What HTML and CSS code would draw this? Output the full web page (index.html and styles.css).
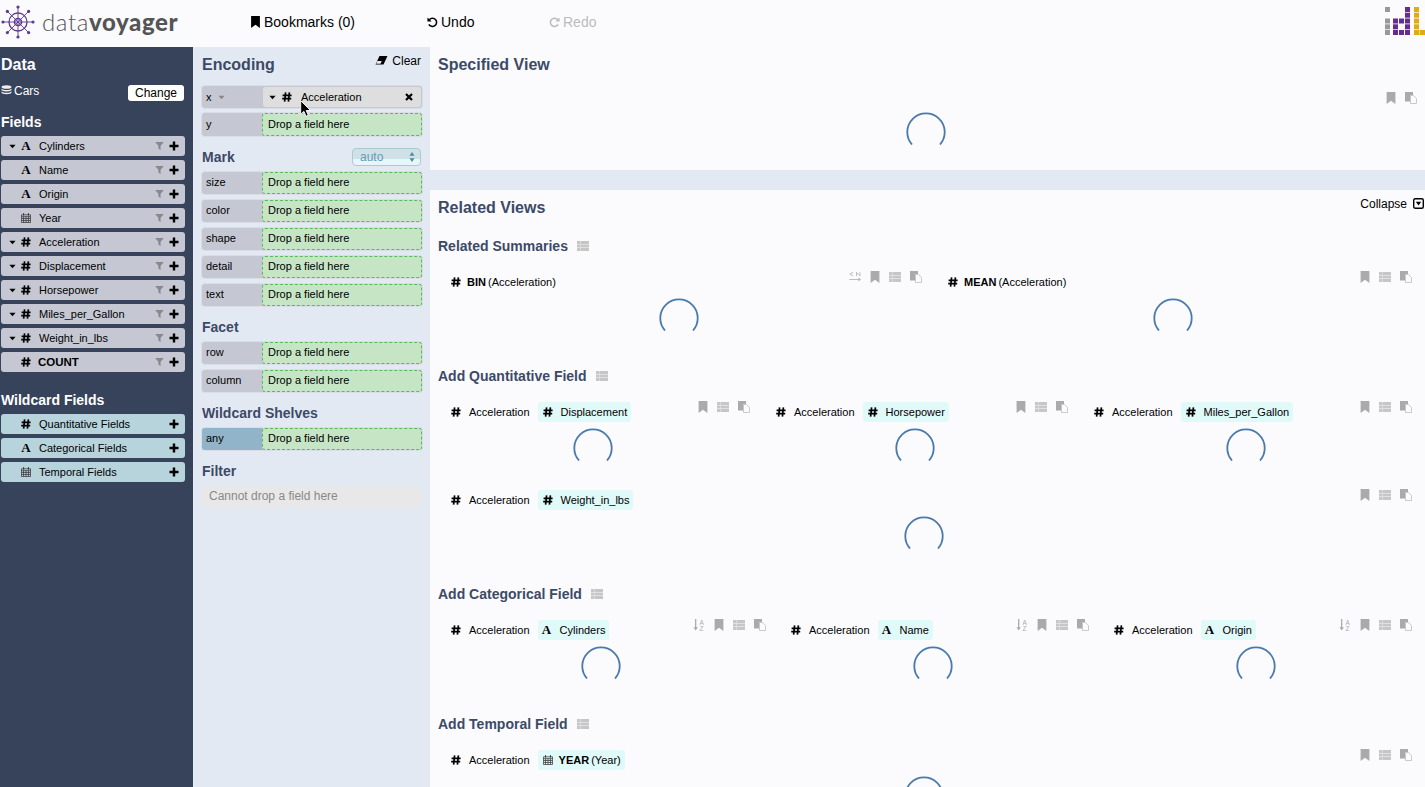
FILE: index.html
```html
<!DOCTYPE html>
<html>
	<head>
		<meta charset="utf-8" />
		<title>Voyager</title>
		<link rel="stylesheet" href="styles.css">
	</head>
	<body>
		<svg class="sprite" xmlns="http://www.w3.org/2000/svg">
			<symbol id="i-hash" viewBox="0 0 10 10"><path d="M3.6 .3 2.6 9.7M7.4 .3 6.4 9.7M.6 3.3h9M.2 6.7h9" fill="none" stroke="currentColor" stroke-width="1.7"/></symbol>
			<symbol id="i-plus" viewBox="0 0 10 10"><path d="M3.8 .5h2.4v3.3h3.3v2.4H6.2v3.3H3.8V6.2H.5V3.8h3.3z" fill="currentColor"/></symbol>
			<symbol id="i-filter" viewBox="0 0 10 10"><path d="M.2 .5h9.6L6.2 4.6v5L3.8 7.8V4.6z" fill="currentColor"/></symbol>
			<symbol id="i-caret" viewBox="0 0 8 5"><path d="M.5 .5h7L4 4.5z" fill="currentColor"/></symbol>
			<symbol id="i-cal" viewBox="0 0 11 11"><path d="M.5 2h10v8.5H.5zM.5 4h10M.5 6h10M.5 8.2h10M2.8 4v6.5M5.5 4v6.5M8.2 4v6.5" fill="none" stroke="currentColor" stroke-width=".8"/><path d="M2.2 .3h1.2v2.4H2.2zM7.6 .3h1.2v2.4H7.6z" fill="currentColor"/></symbol>
			<symbol id="i-db" viewBox="0 0 11 11"><ellipse cx="5.5" cy="2" rx="5" ry="1.8" fill="currentColor"/><path d="M.5 3.4v1.4c0 1 2.2 1.7 5 1.7s5-.7 5-1.7V3.4c-.8 1-2.8 1.5-5 1.5s-4.200-.5-5-1.500zM.5 6.200v1.400c0 1 2.200 1.700 5 1.700s5-.7 5-1.700V6.200c-.8 1-2.800 1.500-5 1.500s-4.200-.5-5-1.500z" fill="currentColor"/></symbol>
			<symbol id="i-bookmark" viewBox="0 0 10 12"><path d="M.6 0h8.800v12L5 8.800.6 12z" fill="currentColor"/></symbol>
			<symbol id="i-list" viewBox="0 0 12 10"><path d="M0 0h12v3H0zM0 3.500h12v3H0zM0 7h12v3H0z" fill="#c6c6c6"/><path d="M3.400 0v10" stroke="#e4e4e4" stroke-width=".7"/></symbol>
			<symbol id="i-copy" viewBox="0 0 12 12"><path d="M0 0h8v3H5.500v6.500H0z" fill="#aaa"/><path d="M5.500 3.500h3L11.500 6.500v5H5.500z" fill="#fbfbfe" stroke="#c4c4c4" stroke-width=".9"/></symbol>
			<symbol id="i-swap" viewBox="0 0 12 11"><path d="M4.200 .8.800 2.600l3.400 1.800M7.500 4.400V.8l3.500 3.600V.8M.3 8h9.700" fill="none" stroke="currentColor" stroke-width=".9"/><path d="M9.500 6 12 8 9.500 10z" fill="currentColor"/></symbol>
			<symbol id="i-sort" viewBox="0 0 12 13"><path d="M2.400 0v10" stroke="#aaa" stroke-width="1.400"/><path d="M0 9h4.800L2.400 12.500z" fill="#aaa"/><text x="6.500" y="6" font-size="7" font-family="Liberation Sans" fill="#aaa">A</text><text x="6.500" y="13" font-size="7" font-family="Liberation Sans" fill="#aaa">Z</text></symbol>
			<symbol id="i-spin" viewBox="0 0 40 33"><path d="M6 32.500A18.700 18.700 0 1 1 34 32.500" fill="none" stroke="currentColor" stroke-width="1.800"/></symbol>
		</svg>

		<header class="topbar">
			<div class="logo">
				<svg class="logo-wheel" viewBox="0 0 34 34">
					<g stroke="#5d3b8f" fill="none">
						<circle cx="17" cy="17" r="9" stroke-width="1.300"/>
						<circle cx="17" cy="17" r="3.500" stroke-width="1.600"/>
						<path d="M17 1v32M1 17h32M5.700 5.700l22.600 22.600M28.300 5.700 5.700 28.300" stroke-width=".9"/>
					</g>
					<g fill="#5d3b8f">
						<circle cx="17" cy="2" r="1.600"/><circle cx="17" cy="32" r="1.600"/><circle cx="2" cy="17" r="1.600"/><circle cx="32" cy="17" r="1.600"/>
						<circle cx="6.400" cy="6.400" r="1.600"/><circle cx="27.600" cy="6.400" r="1.600"/><circle cx="6.400" cy="27.600" r="1.600"/><circle cx="27.600" cy="27.600" r="1.600"/>
					</g>
				</svg>
				<span class="logo-text">data<b>voyager</b></span>
			</div>
			<a class="nav nav-bookmarks"><svg class="nav-icon"><use href="#i-bookmark"/></svg>Bookmarks (0)</a>
			<a class="nav nav-undo">
				<svg class="nav-icon" viewBox="0 0 12 12"><path d="M2.500 3.500A4.500 4.500 0 1 1 2 8.500" fill="none" stroke="currentColor" stroke-width="1.700"/><path d="M.5 1v4.500H5z" fill="currentColor"/></svg>Undo</a>
			<a class="nav nav-redo">
				<svg class="nav-icon" viewBox="0 0 12 12"><path d="M9.500 3.500A4.500 4.500 0 1 0 10 8.500" fill="none" stroke="currentColor" stroke-width="1.700"/><path d="M11.500 1v4.500H7z" fill="currentColor"/></svg>Redo</a>
			<svg class="idl-logo" viewBox="0 0 40 29">
				<g fill="#999">
					<rect x="0" y="0" width="5" height="5"/><rect x="0" y="11.500" width="5" height="5"/><rect x="0" y="17.300" width="5" height="5"/><rect x="0" y="23" width="5" height="5"/>
				</g>
				<g fill="#662d91">
					<rect x="8" y="11.500" width="5" height="5"/><rect x="14" y="11.500" width="5" height="5"/>
					<rect x="8" y="17.300" width="5" height="5"/>
					<rect x="8" y="23" width="5" height="5"/><rect x="14" y="23" width="5" height="5"/>
					<rect x="20" y="0" width="5" height="5"/><rect x="20" y="5.700" width="5" height="5"/><rect x="20" y="11.500" width="5" height="5"/><rect x="20" y="17.300" width="5" height="5"/><rect x="20" y="23" width="5" height="5"/>
				</g>
				<g fill="#e0ac10">
					<rect x="29" y="0" width="5" height="5"/><rect x="29" y="5.700" width="5" height="5"/><rect x="29" y="11.500" width="5" height="5"/><rect x="29" y="17.300" width="5" height="5"/><rect x="29" y="23" width="5" height="5"/><rect x="34.500" y="23" width="5.500" height="5"/>
				</g>
			</svg>
		</header>

		<div class="app">
			<aside class="sidebar">
				<h2 class="side-title">Data</h2>
				<div class="dataset">
					<svg class="dataset-icon"><use href="#i-db"/></svg><span class="dataset-name">Cars</span>
					<button class="change-btn">Change</button>
				</div>
				<h3 class="side-subtitle">Fields</h3>
				<div class="field"><svg class="caret"><use href="#i-caret"/></svg><span class="type-a">A</span><span class="field-name">Cylinders</span><svg class="filter"><use href="#i-filter"/></svg><svg class="plus"><use href="#i-plus"/></svg></div>
				<div class="field"><span class="caret"></span><span class="type-a">A</span><span class="field-name">Name</span><svg class="filter"><use href="#i-filter"/></svg><svg class="plus"><use href="#i-plus"/></svg></div>
				<div class="field"><span class="caret"></span><span class="type-a">A</span><span class="field-name">Origin</span><svg class="filter"><use href="#i-filter"/></svg><svg class="plus"><use href="#i-plus"/></svg></div>
				<div class="field"><span class="caret"></span><svg class="type-icon cal"><use href="#i-cal"/></svg><span class="field-name">Year</span><svg class="filter"><use href="#i-filter"/></svg><svg class="plus"><use href="#i-plus"/></svg></div>
				<div class="field"><svg class="caret"><use href="#i-caret"/></svg><svg class="type-icon"><use href="#i-hash"/></svg><span class="field-name">Acceleration</span><svg class="filter"><use href="#i-filter"/></svg><svg class="plus"><use href="#i-plus"/></svg></div>
				<div class="field"><svg class="caret"><use href="#i-caret"/></svg><svg class="type-icon"><use href="#i-hash"/></svg><span class="field-name">Displacement</span><svg class="filter"><use href="#i-filter"/></svg><svg class="plus"><use href="#i-plus"/></svg></div>
				<div class="field"><svg class="caret"><use href="#i-caret"/></svg><svg class="type-icon"><use href="#i-hash"/></svg><span class="field-name">Horsepower</span><svg class="filter"><use href="#i-filter"/></svg><svg class="plus"><use href="#i-plus"/></svg></div>
				<div class="field"><svg class="caret"><use href="#i-caret"/></svg><svg class="type-icon"><use href="#i-hash"/></svg><span class="field-name">Miles_per_Gallon</span><svg class="filter"><use href="#i-filter"/></svg><svg class="plus"><use href="#i-plus"/></svg></div>
				<div class="field"><svg class="caret"><use href="#i-caret"/></svg><svg class="type-icon"><use href="#i-hash"/></svg><span class="field-name">Weight_in_lbs</span><svg class="filter"><use href="#i-filter"/></svg><svg class="plus"><use href="#i-plus"/></svg></div>
				<div class="field"><span class="caret"></span><svg class="type-icon"><use href="#i-hash"/></svg><span class="field-name count">COUNT</span><svg class="filter"><use href="#i-filter"/></svg><svg class="plus"><use href="#i-plus"/></svg></div>

				<h3 class="side-subtitle wildcard-title">Wildcard Fields</h3>
				<div class="field wild"><span class="caret"></span><svg class="type-icon"><use href="#i-hash"/></svg><span class="field-name">Quantitative Fields</span><svg class="plus"><use href="#i-plus"/></svg></div>
				<div class="field wild"><span class="caret"></span><span class="type-a">A</span><span class="field-name">Categorical Fields</span><svg class="plus"><use href="#i-plus"/></svg></div>
				<div class="field wild"><span class="caret"></span><svg class="type-icon cal"><use href="#i-cal"/></svg><span class="field-name">Temporal Fields</span><svg class="plus"><use href="#i-plus"/></svg></div>
			</aside>

			<section class="encoding">
				<div class="enc-head">
					<h2 class="pane-title">Encoding</h2>
					<a class="clear">
						<svg class="clear-icon" viewBox="0 0 12 9"><path d="M4 0h8L8 8.500H0z" fill="#000"/><path d="M1.800 5h4.500L5 7.700H.6z" fill="#e3e9f3"/></svg>Clear</a>
				</div>
				<div class="shelf first">
					<div class="shelf-label">x<svg class="label-caret"><use href="#i-caret"/></svg></div>
					<div class="pill">
						<svg class="caret"><use href="#i-caret"/></svg>
						<svg class="type-icon"><use href="#i-hash"/></svg>
						<span class="pill-name">Acceleration</span>
						<svg class="pill-x" viewBox="0 0 8 8"><path d="M1 1l6 6M7 1 1 7" stroke="#000" stroke-width="2.200"/></svg>
						<svg class="cursor" viewBox="0 0 11 17"><path d="M.7 .7v13.600l3.200-3 2.100 5 2.300-1-2.100-4.800h4.300z" fill="#000" stroke="#fff" stroke-width=".9"/></svg>
					</div>
				</div>
				<div class="shelf second"><div class="shelf-label">y</div><div class="drop">Drop a field here</div></div>

				<div class="enc-title mark-head">
					<span>Mark</span>
					<span class="mark-select">auto<svg class="updown" viewBox="0 0 6 10"><path d="M3 0l2.500 3.800h-5zM3 10 .5 6.200h5z" fill="#4a8aa8"/></svg></span>
				</div>
				<div class="shelf"><div class="shelf-label">size</div><div class="drop">Drop a field here</div></div>
				<div class="shelf"><div class="shelf-label">color</div><div class="drop">Drop a field here</div></div>
				<div class="shelf"><div class="shelf-label">shape</div><div class="drop">Drop a field here</div></div>
				<div class="shelf"><div class="shelf-label">detail</div><div class="drop">Drop a field here</div></div>
				<div class="shelf"><div class="shelf-label">text</div><div class="drop">Drop a field here</div></div>

				<div class="enc-title">Facet</div>
				<div class="shelf"><div class="shelf-label">row</div><div class="drop">Drop a field here</div></div>
				<div class="shelf"><div class="shelf-label">column</div><div class="drop">Drop a field here</div></div>

				<div class="enc-title">Wildcard Shelves</div>
				<div class="shelf"><div class="shelf-label any">any</div><div class="drop">Drop a field here</div></div>

				<div class="enc-title">Filter</div>
				<div class="no-drop">Cannot drop a field here</div>
			</section>

			<main class="views">
				<section class="specified">
					<h2 class="pane-title">Specified View</h2>
					<div class="tools spec-tools"><svg class="tool bm"><use href="#i-bookmark"/></svg><svg class="tool"><use href="#i-copy"/></svg></div>
					<svg class="spinner"><use href="#i-spin"/></svg>
				</section>
				<div class="band"></div>
				<section class="related">
					<div class="related-head">
						<h2 class="pane-title">Related Views</h2>
						<a class="collapse">Collapse<svg class="collapse-icon" viewBox="0 0 11 11"><rect x=".7" y=".7" width="9.600" height="9.600" rx="1.500" fill="none" stroke="#000" stroke-width="1.400"/><path d="M2.800 3.800h5.400L5.500 7.500z" fill="#000"/></svg></a>
					</div>

					<h3 class="group-title">Related Summaries<svg class="tool group-icon"><use href="#i-list"/></svg></h3>
					<div class="cards cards-summaries">
						<div class="card">
							<div class="card-head">
								<span class="enc-field"><svg class="type-icon"><use href="#i-hash"/></svg><span class="view-name agg"><b>BIN</b> (Acceleration)</span></span>
								<div class="tools"><svg class="tool"><use href="#i-swap"/></svg><svg class="tool bm"><use href="#i-bookmark"/></svg><svg class="tool"><use href="#i-list"/></svg><svg class="tool"><use href="#i-copy"/></svg></div>
							</div>
							<svg class="spinner"><use href="#i-spin"/></svg>
						</div>
						<div class="card">
							<div class="card-head">
								<span class="enc-field"><svg class="type-icon"><use href="#i-hash"/></svg><span class="view-name agg"><b>MEAN</b> (Acceleration)</span></span>
								<div class="tools"><svg class="tool bm"><use href="#i-bookmark"/></svg><svg class="tool"><use href="#i-list"/></svg><svg class="tool"><use href="#i-copy"/></svg></div>
							</div>
							<svg class="spinner"><use href="#i-spin"/></svg>
						</div>
					</div>

					<h3 class="group-title">Add Quantitative Field<svg class="tool group-icon"><use href="#i-list"/></svg></h3>
					<div class="cards cards-quant">
						<div class="card">
							<div class="card-head">
								<span class="enc-field"><svg class="type-icon"><use href="#i-hash"/></svg><span class="view-name">Acceleration</span></span>
								<span class="chip"><svg class="type-icon"><use href="#i-hash"/></svg><span class="view-name">Displacement</span></span>
								<div class="tools"><svg class="tool bm"><use href="#i-bookmark"/></svg><svg class="tool"><use href="#i-list"/></svg><svg class="tool"><use href="#i-copy"/></svg></div>
							</div>
							<svg class="spinner"><use href="#i-spin"/></svg>
						</div>
						<div class="card">
							<div class="card-head">
								<span class="enc-field"><svg class="type-icon"><use href="#i-hash"/></svg><span class="view-name">Acceleration</span></span>
								<span class="chip"><svg class="type-icon"><use href="#i-hash"/></svg><span class="view-name">Horsepower</span></span>
								<div class="tools"><svg class="tool bm"><use href="#i-bookmark"/></svg><svg class="tool"><use href="#i-list"/></svg><svg class="tool"><use href="#i-copy"/></svg></div>
							</div>
							<svg class="spinner"><use href="#i-spin"/></svg>
						</div>
						<div class="card">
							<div class="card-head">
								<span class="enc-field"><svg class="type-icon"><use href="#i-hash"/></svg><span class="view-name">Acceleration</span></span>
								<span class="chip"><svg class="type-icon"><use href="#i-hash"/></svg><span class="view-name">Miles_per_Gallon</span></span>
								<div class="tools"><svg class="tool bm"><use href="#i-bookmark"/></svg><svg class="tool"><use href="#i-list"/></svg><svg class="tool"><use href="#i-copy"/></svg></div>
							</div>
							<svg class="spinner"><use href="#i-spin"/></svg>
						</div>
						<div class="card card-full">
							<div class="card-head">
								<span class="enc-field"><svg class="type-icon"><use href="#i-hash"/></svg><span class="view-name">Acceleration</span></span>
								<span class="chip"><svg class="type-icon"><use href="#i-hash"/></svg><span class="view-name">Weight_in_lbs</span></span>
								<div class="tools"><svg class="tool bm"><use href="#i-bookmark"/></svg><svg class="tool"><use href="#i-list"/></svg><svg class="tool"><use href="#i-copy"/></svg></div>
							</div>
							<svg class="spinner"><use href="#i-spin"/></svg>
						</div>
					</div>

					<h3 class="group-title">Add Categorical Field<svg class="tool group-icon"><use href="#i-list"/></svg></h3>
					<div class="cards cards-cat">
						<div class="card">
							<div class="card-head">
								<span class="enc-field"><svg class="type-icon"><use href="#i-hash"/></svg><span class="view-name">Acceleration</span></span>
								<span class="chip"><span class="type-a">A</span><span class="view-name">Cylinders</span></span>
								<div class="tools"><svg class="tool"><use href="#i-sort"/></svg><svg class="tool bm"><use href="#i-bookmark"/></svg><svg class="tool"><use href="#i-list"/></svg><svg class="tool"><use href="#i-copy"/></svg></div>
							</div>
							<svg class="spinner"><use href="#i-spin"/></svg>
						</div>
						<div class="card">
							<div class="card-head">
								<span class="enc-field"><svg class="type-icon"><use href="#i-hash"/></svg><span class="view-name">Acceleration</span></span>
								<span class="chip"><span class="type-a">A</span><span class="view-name">Name</span></span>
								<div class="tools"><svg class="tool"><use href="#i-sort"/></svg><svg class="tool bm"><use href="#i-bookmark"/></svg><svg class="tool"><use href="#i-list"/></svg><svg class="tool"><use href="#i-copy"/></svg></div>
							</div>
							<svg class="spinner"><use href="#i-spin"/></svg>
						</div>
						<div class="card">
							<div class="card-head">
								<span class="enc-field"><svg class="type-icon"><use href="#i-hash"/></svg><span class="view-name">Acceleration</span></span>
								<span class="chip"><span class="type-a">A</span><span class="view-name">Origin</span></span>
								<div class="tools"><svg class="tool"><use href="#i-sort"/></svg><svg class="tool bm"><use href="#i-bookmark"/></svg><svg class="tool"><use href="#i-list"/></svg><svg class="tool"><use href="#i-copy"/></svg></div>
							</div>
							<svg class="spinner"><use href="#i-spin"/></svg>
						</div>
					</div>

					<h3 class="group-title">Add Temporal Field<svg class="tool group-icon"><use href="#i-list"/></svg></h3>
					<div class="cards">
						<div class="card">
							<div class="card-head">
								<span class="enc-field"><svg class="type-icon"><use href="#i-hash"/></svg><span class="view-name">Acceleration</span></span>
								<span class="chip"><svg class="type-icon cal"><use href="#i-cal"/></svg><span class="view-name agg"><b>YEAR</b> (Year)</span></span>
								<div class="tools"><svg class="tool bm"><use href="#i-bookmark"/></svg><svg class="tool"><use href="#i-list"/></svg><svg class="tool"><use href="#i-copy"/></svg></div>
							</div>
							<svg class="spinner"><use href="#i-spin"/></svg>
						</div>
					</div>
				</section>
			</main>
		</div>
	</body>
</html>
```

FILE: styles.css
```css
html, body {
	margin: 0;
	height: 787px;
	overflow: hidden;
}
body {
	font-family: "Liberation Sans", Arial, sans-serif;
	font-size: 11px;
	color: #000;
	background: #fbfbfe;
}
h2, h3 { margin: 0; }
svg { display: block; flex: none; }
.sprite { display: none; }

/* top bar */
.topbar {
	height: 47px;
	box-sizing: border-box;
	padding-bottom: 4px;
	display: flex;
	align-items: center;
	background: #fbfbfe;
}
.logo {
	display: flex;
	align-items: center;
	width: 250px;
	padding-left: 1px;
	box-sizing: border-box;
}
.logo-wheel { width: 34px; height: 34px; }
.logo-text {
	font-family: Lato, sans-serif;
	font-size: 24px;
	font-weight: 300;
	color: #555;
	margin-left: 7px;
	letter-spacing: .6px;
}
.logo-text b { font-weight: 900; }
.nav {
	display: flex;
	align-items: center;
	font-size: 14px;
	color: #000;
}
.nav-icon { width: 11px; height: 12px; margin-right: 3px; }
.nav-bookmarks { width: 177px; }
.nav-undo { width: 122px; }
.nav-redo { color: #bbb; }
.idl-logo {
	width: 40px;
	height: 29px;
	margin-left: auto;
}

/* three columns */
.app {
	display: flex;
	height: 740px;
}
.sidebar {
	width: 193px;
	flex: none;
	padding-left: 1px;
	padding-right: 8px;
	box-sizing: border-box;
	background: #37435a;
	color: #fff;
}
.side-title {
	font-size: 16px;
	line-height: 34px;
	padding-top: 1px;
	height: 34px;
	box-sizing: border-box;
}
.dataset {
	display: flex;
	align-items: center;
	height: 16px;
	margin-top: 4px;
	font-size: 12px;
}
.dataset-icon { width: 11px; height: 11px; margin-top: -5px; color: #eee; }
.dataset-name { margin: -5px 0 0 2px; }
.change-btn {
	margin-left: auto;
	margin-right: 1px;
	width: 56px;
	height: 16px;
	padding: 0;
	border: 0;
	border-radius: 3px;
	background: #fff;
	color: #000;
	font-family: inherit;
	font-size: 12px;
}
.side-subtitle {
	font-size: 14px;
	line-height: 28px;
	margin-top: 7px;
}
.wildcard-title { margin-top: 14px; }

.field {
	display: flex;
	align-items: center;
	height: 20px;
	margin-bottom: 4px;
	border-radius: 3px;
	background: #c5c8d3;
	color: #000;
}
.field.wild { background: #b7d3dc; }
.caret {
	width: 7px;
	height: 5px;
	margin-left: 8px;
	flex: none;
}
.type-icon {
	width: 10px;
	height: 10px;
	margin-left: 5px;
}
.type-icon.cal { color: #333; }
.type-a {
	font-family: "Liberation Serif", serif;
	font-weight: bold;
	font-size: 13px;
	width: 10px;
	margin-left: 5px;
	text-align: center;
	line-height: 14px;
}
.field-name { margin-left: 8px; }
.field-name.count { font-weight: bold; margin-left: 7px; font-size: 11.500px; }
.filter {
	width: 9px;
	height: 10px;
	margin-left: auto;
	color: #888;
}
.plus {
	width: 10px;
	height: 10px;
	margin-left: 5px;
	margin-right: 6px;
}
.wild .plus { margin-left: auto; }

/* encoding pane */
.encoding {
	width: 237px;
	flex: none;
	padding: 0 8px 0 9px;
	box-sizing: border-box;
	background: #e3e9f3;
}
.pane-title {
	font-size: 16px;
	line-height: 34px;
	height: 34px;
	padding-top: 1px;
	color: #3c4a66;
}
.enc-head {
	display: flex;
	justify-content: space-between;
	height: 39px;
}
.clear {
	display: flex;
	align-items: center;
	height: 27px;
	margin-right: 1px;
	font-size: 12px;
}
.clear-icon { width: 13px; height: 9px; margin-right: 4px; }
.enc-title {
	height: 28px;
	line-height: 28px;
	margin: 7px 0 1px;
	font-size: 14px;
	font-weight: bold;
	color: #3c4a66;
}
.mark-head {
	display: flex;
	justify-content: space-between;
	align-items: center;
}
.mark-select {
	display: flex;
	justify-content: space-between;
	align-items: center;
	box-sizing: border-box;
	width: 69px;
	height: 18px;
	padding: 0 5px 0 7px;
	margin-right: 1px;
	border: 1px solid #a9cbd6;
	border-radius: 4px;
	background: linear-gradient(#cfe0e6 60%, #e6f7fa 60%);
	font-size: 12px;
	font-weight: normal;
	color: #5f9cb5;
}
.updown { width: 6px; height: 10px; }
.shelf {
	display: flex;
	height: 22px;
	margin-bottom: 6px;
	border-radius: 3px;
	background: #c5c8d3;
	box-shadow: 0 0 0 1px #d9dde6;
}
.shelf.first { margin-bottom: 5px; }
.shelf.second { height: 23px; margin-bottom: 0; }
.shelf-label {
	display: flex;
	align-items: center;
	width: 60px;
	flex: none;
	padding: 0 0 2px 4px;
	box-sizing: border-box;
	border-radius: 3px 0 0 3px;
}
.first .shelf-label { padding-bottom: 0; }
.shelf-label.any { background: #92b4c8; }
.label-caret { width: 7px; height: 5px; margin-left: 6px; color: #888; }
.drop {
	flex: 1;
	display: flex;
	align-items: center;
	padding: 0 0 2px 5px;
	border: 1px dashed #5cb85c;
	border-radius: 3px;
	background: #c5e5c5;
}
.pill {
	flex: 1;
	position: relative;
	display: flex;
	align-items: center;
	margin: 1px;
	border-radius: 3px;
	background: #dedede;
}
.pill .caret { margin-left: 6px; }
.pill .type-icon { margin-left: 6px; }
.pill-name { margin-left: 9px; }
.pill-x { width: 8px; height: 8px; margin-left: auto; margin-right: 8px; }
.cursor {
	position: absolute;
	left: 37px;
	top: 13px;
	width: 11px;
	height: 17px;
}
.no-drop {
	height: 22px;
	line-height: 20px;
	padding-left: 7px;
	width: 219px;
	box-sizing: border-box;
	border-radius: 3px;
	background: #e8e8e8;
	font-size: 12px;
	color: #888;
}

/* views */
.views {
	flex: 1;
	min-width: 0;
	overflow: hidden;
}
.specified {
	height: 123px;
	padding: 0 12px 0 8px;
	box-sizing: border-box;
}
.specified .pane-title { height: 33px; }
.band {
	height: 20px;
	background: #e3e9f3;
}
.tools {
	display: flex;
	margin-left: auto;
	margin-top: -1px;
	gap: 9px;
	color: #b5b5b5;
}
.spec-tools {
	justify-content: flex-end;
	margin: 11px -4px 0 0;
	height: 12px;
}
.tool {
	width: 12px;
	height: 12px;
}
.tool.bm { width: 10px; color: #aaa; }
.spinner {
	width: 40px;
	height: 33px;
	margin: 8px auto 0;
	color: #4a7aab;
}
.related {
	padding: 0 13px 0 8px;
}
.related-head {
	display: flex;
	justify-content: space-between;
	height: 40px;
}
.collapse {
	display: flex;
	align-items: center;
	height: 27px;
	margin-right: -12px;
	font-size: 12px;
}
.collapse-icon { width: 11px; height: 11px; margin-left: 6px; }
.group-title {
	display: flex;
	align-items: center;
	height: 32px;
	margin-bottom: 10px;
	font-size: 14px;
	color: #3c4a66;
}
.group-icon { margin-left: 9px; }
.cards {
	display: grid;
	grid-auto-rows: 88px;
}
.cards-summaries { grid-template-columns: 484px 477px; column-gap: 13px; }
.cards-quant { grid-template-columns: 312px 305px 331px; column-gap: 13px; }
.cards-cat { grid-template-columns: 328px 311px 311px; column-gap: 12px; }
.card-full { grid-column: 1 / -1; }
.card { padding-right: 2px; box-sizing: border-box; }
.card-head {
	display: flex;
	align-items: flex-start;
	padding-left: 13px;
	margin-right: -2px;
	height: 20px;
}
.enc-field {
	display: flex;
	align-items: center;
	height: 20px;
}
.enc-field .type-icon { margin-left: 0; }
.view-name { margin-left: 8px; white-space: nowrap; }
.view-name.agg { margin-left: 6px; word-spacing: -1px; }
.chip {
	display: flex;
	align-items: center;
	height: 20px;
	margin-left: 8px;
	padding-right: 4px;
	border-radius: 3px;
	background: #e0f9f9;
}
.chip .type-icon { margin-left: 5px; }
.chip .type-a { margin-left: 4px; }
.card .spinner { margin-top: 6px; }
```
